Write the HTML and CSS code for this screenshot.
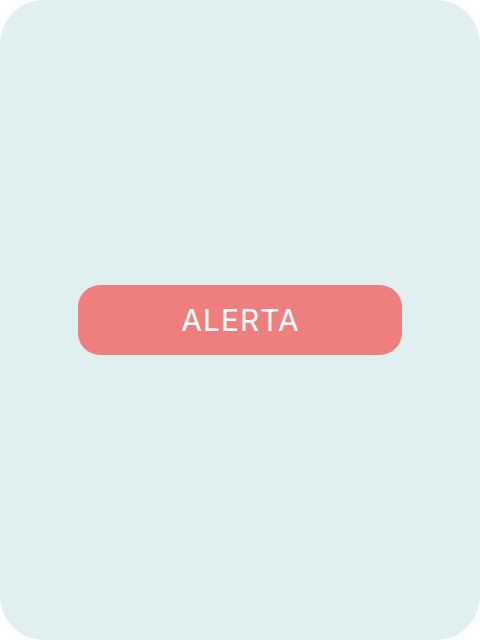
FILE: index.html
```html
<!DOCTYPE html>
<html>
<head>
<meta charset="utf-8">
<link rel="stylesheet" href="styles.css">
</head>
<body>
<div class="card">
  <button class="alert-btn">ALERTA</button>
</div>
</body>
</html>
```
FILE: styles.css
```css
html, body {
  margin: 0;
  padding: 0;
  background: #ffffff;
}
.card {
  width: 480px;
  height: 640px;
  background: #e0f0f0;
  border-radius: 44px;
  display: flex;
  align-items: center;
  justify-content: center;
}
.alert-btn {
  width: 324px;
  height: 70px;
  border: none;
  border-radius: 22px;
  background: #ef7f7e;
  color: #ffffff;
  font-family: Inter, "Noto Sans", sans-serif;
  font-size: 30px;
  font-weight: 400;
  letter-spacing: 1px;
  text-indent: 1px;
  padding: 0;
}
```
